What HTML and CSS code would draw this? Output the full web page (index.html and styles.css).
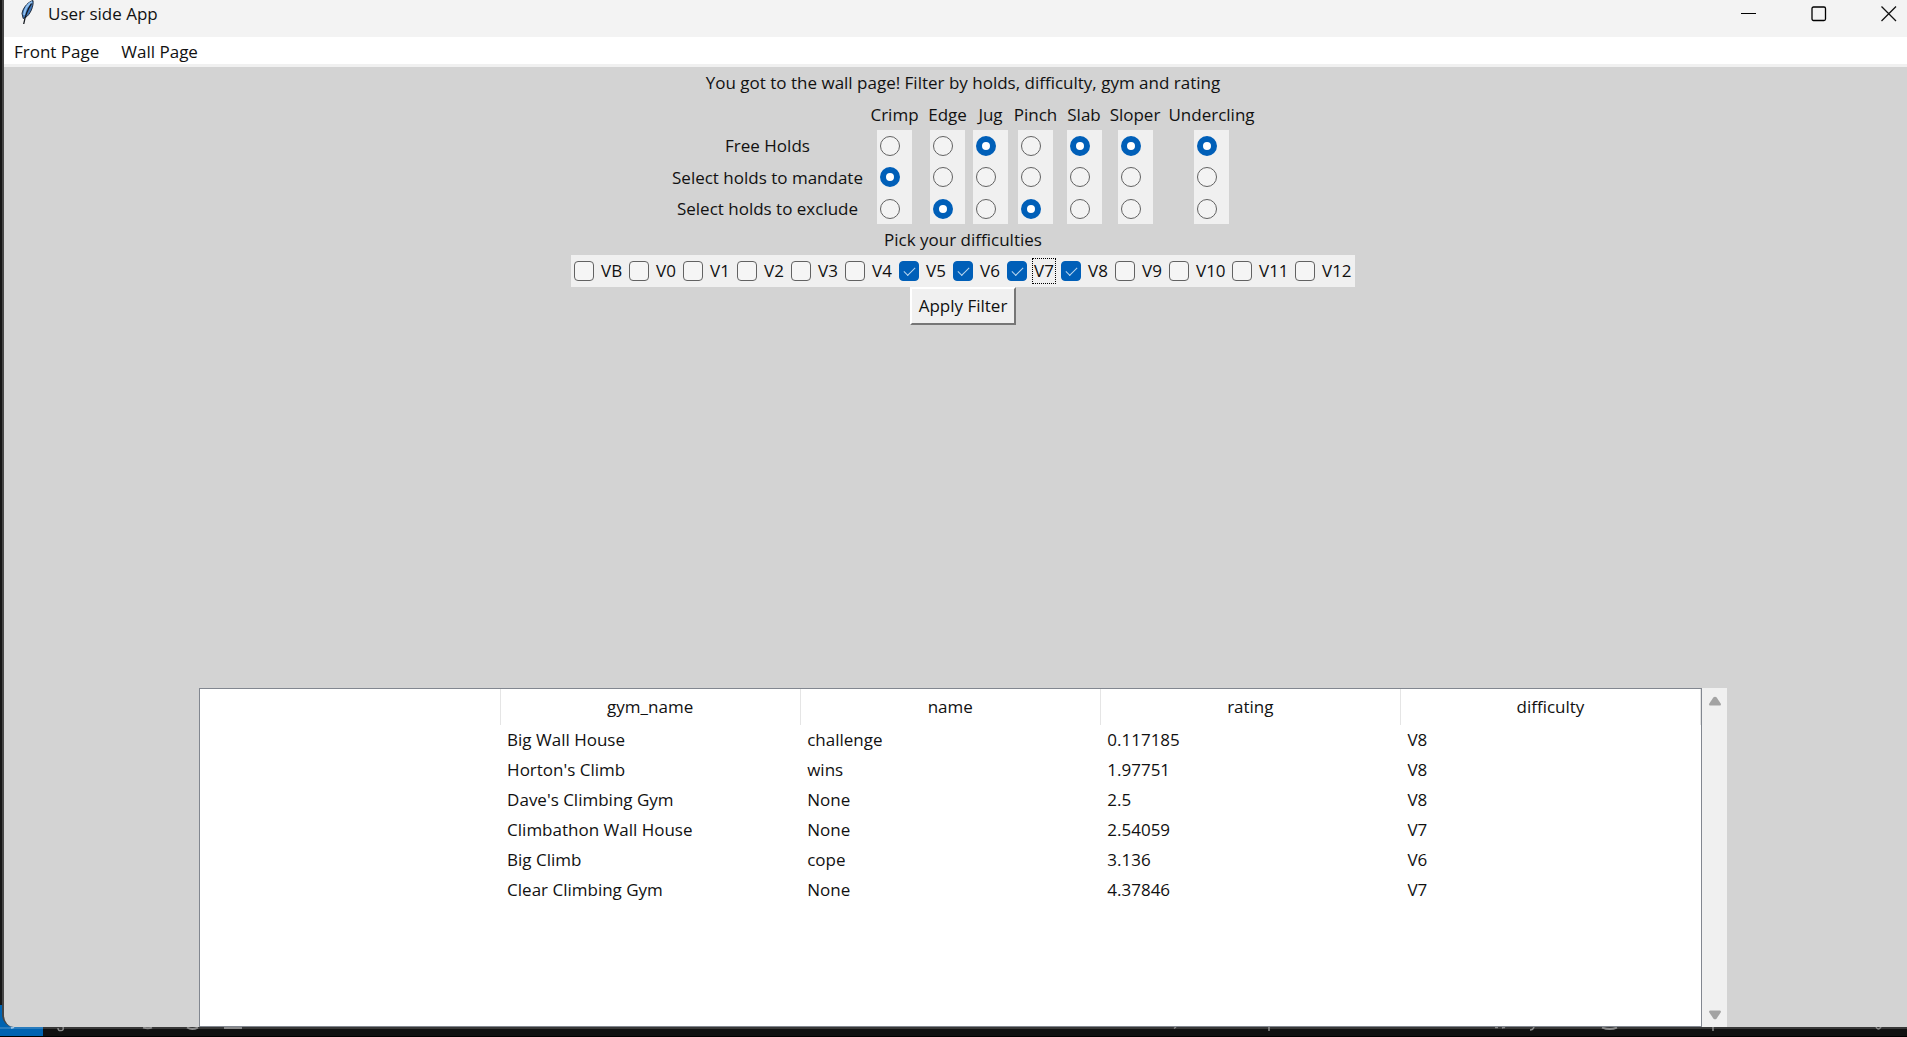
FILE: index.html
```html
<!DOCTYPE html>
<html lang="en">
<head>
<meta charset="utf-8">
<title>User side App</title>
<link rel="stylesheet" href="styles.css">
</head>
<body>
<div class="window">
  <header class="titlebar">
    <svg class="feather" width="16" height="24" viewBox="0 0 16 24" aria-hidden="true">
      <path d="M13 0.500C9 1.500 3 7 2 13.500L3.200 18.500L5.500 17.500C10 15 14 6 13 0.500Z" fill="#3d74b8" stroke="#26313f" stroke-width="1"/>
      <path d="M12 2C8 4 5 9 4 15" fill="none" stroke="#8fc0f0" stroke-width="2"/>
      <path d="M11.500 3.500C8.500 8 5.500 14 3.700 24" fill="none" stroke="#14181e" stroke-width="1.300"/>
    </svg>
    <h1 class="title">User side App</h1>
    <div class="window-buttons">
      <button class="winbtn" aria-label="Minimize"><svg width="16" height="16" viewBox="0 0 16 16"><path d="M0 7.500H15" stroke="#000"/></svg></button>
      <button class="winbtn" aria-label="Maximize"><svg width="16" height="16" viewBox="0 0 16 16"><rect x="1" y="1" width="13.500" height="13.500" rx="1.500" fill="none" stroke="#000" stroke-width="1.300"/></svg></button>
      <button class="winbtn" aria-label="Close"><svg width="16" height="16" viewBox="0 0 16 16"><path d="M0.500 0.500L15 15M15 0.500L0.500 15" stroke="#111" stroke-width="1.300"/></svg></button>
    </div>
  </header>
  <nav class="menubar">
    <a href="#front">Front Page</a>
    <a href="#wall">Wall Page</a>
  </nav>
  <main class="page">
    <p class="line intro">You got to the wall page! Filter by holds, difficulty, gym and rating</p>
    <table class="holds">
      <colgroup><col class="c-label"><col class="c-crimp"><col class="c-edge"><col class="c-jug"><col class="c-pinch"><col class="c-slab"><col class="c-sloper"><col class="c-under"></colgroup>
      <thead>
        <tr><td></td><th scope="col">Crimp</th><th scope="col">Edge</th><th scope="col">Jug</th><th scope="col">Pinch</th><th scope="col">Slab</th><th scope="col">Sloper</th><th scope="col">Undercling</th></tr>
      </thead>
      <tbody>
        <tr>
          <th scope="row">Free Holds</th>
          <td><label class="cell"><input type="radio" name="crimp" aria-label="Crimp free"></label></td>
          <td><label class="cell"><input type="radio" name="edge" aria-label="Edge free"></label></td>
          <td><label class="cell"><input type="radio" name="jug" aria-label="Jug free" checked></label></td>
          <td><label class="cell"><input type="radio" name="pinch" aria-label="Pinch free"></label></td>
          <td><label class="cell"><input type="radio" name="slab" aria-label="Slab free" checked></label></td>
          <td><label class="cell"><input type="radio" name="sloper" aria-label="Sloper free" checked></label></td>
          <td><label class="cell"><input type="radio" name="undercling" aria-label="Undercling free" checked></label></td>
        </tr>
        <tr>
          <th scope="row">Select holds to mandate</th>
          <td><label class="cell"><input type="radio" name="crimp" aria-label="Crimp mandated" checked></label></td>
          <td><label class="cell"><input type="radio" name="edge" aria-label="Edge mandated"></label></td>
          <td><label class="cell"><input type="radio" name="jug" aria-label="Jug mandated"></label></td>
          <td><label class="cell"><input type="radio" name="pinch" aria-label="Pinch mandated"></label></td>
          <td><label class="cell"><input type="radio" name="slab" aria-label="Slab mandated"></label></td>
          <td><label class="cell"><input type="radio" name="sloper" aria-label="Sloper mandated"></label></td>
          <td><label class="cell"><input type="radio" name="undercling" aria-label="Undercling mandated"></label></td>
        </tr>
        <tr>
          <th scope="row">Select holds to exclude</th>
          <td><label class="cell"><input type="radio" name="crimp" aria-label="Crimp excluded"></label></td>
          <td><label class="cell"><input type="radio" name="edge" aria-label="Edge excluded" checked></label></td>
          <td><label class="cell"><input type="radio" name="jug" aria-label="Jug excluded"></label></td>
          <td><label class="cell"><input type="radio" name="pinch" aria-label="Pinch excluded" checked></label></td>
          <td><label class="cell"><input type="radio" name="slab" aria-label="Slab excluded"></label></td>
          <td><label class="cell"><input type="radio" name="sloper" aria-label="Sloper excluded"></label></td>
          <td><label class="cell"><input type="radio" name="undercling" aria-label="Undercling excluded"></label></td>
        </tr>
      </tbody>
    </table>
    <p class="line">Pick your difficulties</p>
    <div class="grades">
      <label class="grade"><input type="checkbox"><span>VB</span></label>
      <label class="grade"><input type="checkbox"><span>V0</span></label>
      <label class="grade"><input type="checkbox"><span>V1</span></label>
      <label class="grade"><input type="checkbox"><span>V2</span></label>
      <label class="grade"><input type="checkbox"><span>V3</span></label>
      <label class="grade"><input type="checkbox"><span>V4</span></label>
      <label class="grade"><input type="checkbox" checked><span>V5</span></label>
      <label class="grade"><input type="checkbox" checked><span>V6</span></label>
      <label class="grade focused"><input type="checkbox" checked><span>V7</span></label>
      <label class="grade"><input type="checkbox" checked><span>V8</span></label>
      <label class="grade"><input type="checkbox"><span>V9</span></label>
      <label class="grade wide"><input type="checkbox"><span>V10</span></label>
      <label class="grade wide"><input type="checkbox"><span>V11</span></label>
      <label class="grade wide"><input type="checkbox"><span>V12</span></label>
    </div>
    <button class="apply">Apply Filter</button>
    <section class="results">
      <div class="tree">
        <table class="walls">
          <thead>
            <tr><th></th><th scope="col">gym_name</th><th scope="col">name</th><th scope="col">rating</th><th scope="col">difficulty</th></tr>
          </thead>
          <tbody>
            <tr><td></td><td>Big Wall House</td><td>challenge</td><td>0.117185</td><td>V8</td></tr>
            <tr><td></td><td>Horton's Climb</td><td>wins</td><td>1.97751</td><td>V8</td></tr>
            <tr><td></td><td>Dave's Climbing Gym</td><td>None</td><td>2.5</td><td>V8</td></tr>
            <tr><td></td><td>Climbathon Wall House</td><td>None</td><td>2.54059</td><td>V7</td></tr>
            <tr><td></td><td>Big Climb</td><td>cope</td><td>3.136</td><td>V6</td></tr>
            <tr><td></td><td>Clear Climbing Gym</td><td>None</td><td>4.37846</td><td>V7</td></tr>
          </tbody>
        </table>
      </div>
      <div class="scrollbar" aria-hidden="true">
        <svg width="14" height="10" viewBox="0 0 14 10"><path d="M5.500 1.300Q7 0 8.500 1.300L13 8Q13 9.500 12 9.500H2Q1 9.500 1 8Z" fill="#a3a3a3"/></svg>
        <svg width="14" height="10" viewBox="0 0 14 10"><path d="M5.500 8.700Q7 10 8.500 8.700L13 2Q13 0.500 12 0.500H2Q1 0.500 1 2Z" fill="#a3a3a3"/></svg>
      </div>
    </section>
  </main>
</div>
<footer class="taskbar">
  <svg width="1907" height="9" viewBox="0 0 1907 9" fill="none" stroke="#8a8a8a" aria-hidden="true">
    <path d="M11 1l3-1" stroke="#9cc4e6" stroke-width="2"/>
    <path d="M58 1q0 3 3 2.500q3 0 2-3.500" stroke-width="1.500"/>
    <path d="M143 0.500q5 1.500 9 0M187 0.500q5 3 11 0" stroke-width="2"/>
    <path d="M224 1H242" stroke-width="2"/>
    <path d="M1174 1.500l2-1.500M1269 0v4M1495 0.500h3M1502 0.500h3M1502 1l3-1M1530 3q3 0 4-3M1713 0v4M1876 0q2 4 5 0" stroke-width="1.500"/>
    <path d="M1602 0.500q8 3 15 0" stroke-width="2"/>
  </svg>
</footer>
</body>
</html>
```
FILE: styles.css
```css
* { box-sizing: border-box; }

body {
  margin: 0;
  height: 100vh;
  display: flex;
  flex-direction: column;
  overflow: hidden;
  background: linear-gradient(#0063b1, #0063b1) left bottom / 43px 32px no-repeat, #161616;
  color: #111;
  font: 17px/24px "Open Sans", "Noto Sans", sans-serif;
}

button { font: inherit; color: inherit; }

.window {
  flex: 1;
  min-height: 0;
  margin-left: 2px;
  display: flex;
  flex-direction: column;
  overflow: hidden;
  border-left: 2px solid #454545;
  border-bottom-left-radius: 12px;
  background: #d3d3d3;
}

.titlebar {
  display: flex;
  align-items: flex-start;
  height: 37px;
  padding-left: 16px;
  background: #f3f3f3;
}

.feather { flex: none; }

.title {
  margin: 2px 0 0 12px;
  font-size: 17px;
  font-weight: 400;
  line-height: 24px;
}

.window-buttons { display: flex; margin-left: auto; }

.winbtn {
  display: flex;
  justify-content: center;
  width: 70px;
  height: 37px;
  padding: 6px 0 0;
  border: 0;
  background: none;
}

.winbtn:last-child { width: 36px; margin-left: 17px; }

.menubar {
  display: flex;
  gap: 22px;
  height: 30px;
  padding: 3px 10px 0;
  background: #fff;
  border-bottom: 3px solid #f0f0f0;
}

.menubar a { color: inherit; text-decoration: none; }

/* The window runs a little past the right of the screen, so the centre line sits further right. */
.page {
  flex: 1;
  min-height: 0;
  display: flex;
  flex-direction: column;
  align-items: center;
  padding-left: 15px;
}

.line { margin: 0; line-height: 31px; }
.intro { line-height: 32px; }

.holds { table-layout: fixed; width: 590px; border-collapse: collapse; }
.holds th, .holds td { height: 31px; padding: 0; font-weight: 400; line-height: 31px; text-align: center; white-space: nowrap; }
.holds tbody tr:nth-child(2) > * { height: 32px; }
.c-label { width: 199px; }
.c-crimp, .c-pinch { width: 55px; }
.c-edge { width: 51px; }
.c-jug { width: 35px; }
.c-slab { width: 42px; }
.c-sloper { width: 60px; }
.c-under { width: 93px; }

.cell {
  display: flex;
  align-items: center;
  width: 35px;
  height: 31px;
  margin: 0 auto;
  padding-left: 3px;
  background: #f0f0f0;
}
.holds tbody tr:nth-child(2) .cell { height: 32px; }

input { appearance: none; flex: none; width: 20px; height: 20px; margin: 0; }

input[type="radio"] { border: 1px solid #626262; border-radius: 50%; background: #f3f3f3; }
input[type="radio"]:checked { border: 6px solid #005fb8; background: #fff; }

input[type="checkbox"] { border: 1px solid #626262; border-radius: 4px; background: #f5f5f5; }
input[type="checkbox"]:checked { display: grid; place-content: center; border-color: #005fb8; background: #005fb8; }
input[type="checkbox"]:checked::before {
  content: "";
  width: 10px;
  height: 5px;
  margin-bottom: 3px;
  border: solid #b9d6ee;
  border-width: 0 0 1px 1px;
  transform: rotate(-45deg);
}

.grades { display: flex; height: 32px; background: #f0f0f0; }
.grade { display: flex; align-items: center; gap: 5px; width: 54px; padding-left: 3px; }
.grade:first-child { width: 55px; }
.grade.wide { width: 63px; }
.grade span { padding: 0 1px; border: 1px solid transparent; }
.grade.focused span { border: 1px dotted #000; }

.apply {
  height: 38px;
  padding: 0 7px;
  border: 2px solid;
  border-color: #fff #767676 #767676 #fff;
  background: #f0f0f0;
}

.results { display: flex; width: 1528px; margin-top: auto; }

.tree {
  flex: 1;
  min-height: 339px;
  border: 1px solid #828790;
  background: #fff;
}

.walls { table-layout: fixed; width: 100%; border-collapse: collapse; }
.walls th { height: 36px; padding: 0; font-weight: 400; border-right: 1px solid #e5e5e5; }
.walls td { height: 30px; padding: 0 7px; }

.scrollbar {
  display: flex;
  flex-direction: column;
  justify-content: space-between;
  align-items: center;
  width: 25px;
  padding: 8px 0 7px;
  background: #f0f0f0;
}

.taskbar {
  height: 10px;
  overflow: hidden;
  background: linear-gradient(90deg, #0063b1 43px, #111 43px);
  border-bottom: 1px solid #000;
  box-shadow: inset 0 2px #ffffff2a;
}
.taskbar svg { display: block; }
```
